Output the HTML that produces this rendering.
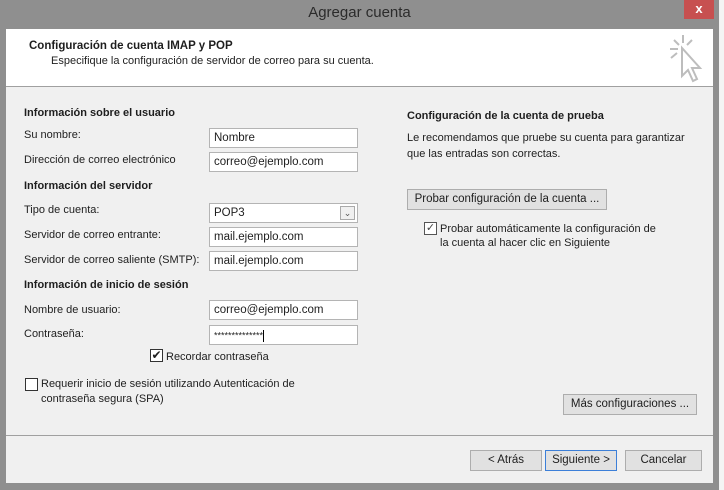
<!DOCTYPE html>
<html><head><meta charset="utf-8"><style>
*{margin:0;padding:0;box-sizing:border-box}
body{width:724px;height:490px;background:#f4f4f4;position:relative;overflow:hidden;font-family:"Liberation Sans",sans-serif;font-size:11px;color:#1e1e1e}
.a{position:absolute;white-space:nowrap}
.inp{position:absolute;background:#fff;border:1px solid #b4b4b4;height:20px;padding:3px 0 0 4px;font-size:11.5px}
.btn{position:absolute;background:#e1e1e1;border:1px solid #adadad;height:21px;text-align:center;line-height:19px;font-size:11.5px}
.h{font-weight:bold}
.cb{position:absolute;width:13px;height:13px;background:#fff;border:1px solid #333}
</style></head><body>
<div class="a" style="left:0;top:0;width:719px;height:490px;background:#8f8f8f"></div>
<div class="a" style="left:684px;top:0;width:30px;height:19px;background:#c75050;color:#fff;text-align:center;font-size:13px;line-height:18px;font-weight:bold">x</div>
<div class="a" style="left:0;top:4px;width:719px;text-align:center;font-size:15px;color:#2b2b2b">Agregar cuenta</div>
<div class="a" style="left:6px;top:29px;width:707px;height:454px;background:#f0f0f0"></div>
<div class="a" style="left:6px;top:29px;width:707px;height:58px;background:#fff;border-bottom:1px solid #a0a0a0"></div>
<div class="a h" style="left:29px;top:40px;font-size:11.5px">Configuración de cuenta IMAP y POP</div>
<div class="a" style="left:51px;top:55px;font-size:11px">Especifique la configuración de servidor de correo para su cuenta.</div>
<svg class="a" style="left:664px;top:32px" width="40" height="52"><g stroke="#bdbdbd" stroke-width="2" fill="none"><path d="M19 3v8M10 8l5 5M28 8l-5 5M6 17h8M7 26l6-5"/><path d="M18 16v28l6-6 5 11 4-2-5-11h8z" fill="#fff"/></g></svg>
<div class="a h" style="left:24px;top:107px">Información sobre el usuario</div>
<div class="a" style="left:24px;top:129px">Su nombre:</div>
<div class="inp" style="left:209px;top:128px;width:149px">Nombre</div>
<div class="a" style="left:24px;top:154px">Dirección de correo electrónico</div>
<div class="inp" style="left:209px;top:152px;width:149px">correo@ejemplo.com</div>
<div class="a h" style="left:24px;top:180px">Información del servidor</div>
<div class="a" style="left:24px;top:204px">Tipo de cuenta:</div>
<div class="inp" style="left:209px;top:203px;width:149px">POP3<div class="a" style="left:130px;top:2px;width:15px;height:14px;border:1px solid #aaa;background:#f0f0f0;font-size:9px;text-align:center;line-height:12px;color:#555">⌄</div></div>
<div class="a" style="left:24px;top:229px">Servidor de correo entrante:</div>
<div class="inp" style="left:209px;top:227px;width:149px">mail.ejemplo.com</div>
<div class="a" style="left:24px;top:254px">Servidor de correo saliente (SMTP):</div>
<div class="inp" style="left:209px;top:251px;width:149px">mail.ejemplo.com</div>
<div class="a h" style="left:24px;top:279px">Información de inicio de sesión</div>
<div class="a" style="left:24px;top:304px">Nombre de usuario:</div>
<div class="inp" style="left:209px;top:300px;width:149px">correo@ejemplo.com</div>
<div class="a" style="left:24px;top:328px">Contraseña:</div>
<div class="inp" style="left:209px;top:325px;width:149px;font-size:9px;padding-top:4px">**************<span style="display:inline-block;width:1px;height:12px;background:#000;vertical-align:middle"></span></div>
<div class="cb" style="left:150px;top:349px;font-size:12px;line-height:11px;text-align:center">✔</div>
<div class="a" style="left:166px;top:351px">Recordar contraseña</div>
<div class="cb" style="left:25px;top:378px"></div>
<div class="a" style="left:41px;top:377px;line-height:15px">Requerir inicio de sesión utilizando Autenticación de<br>contraseña segura (SPA)</div>
<div class="a h" style="left:407px;top:110px">Configuración de la cuenta de prueba</div>
<div class="a" style="left:407px;top:130px;line-height:16px">Le recomendamos que pruebe su cuenta para garantizar<br>que las entradas son correctas.</div>
<div class="btn" style="left:407px;top:189px;width:200px">Probar configuración de la cuenta ...</div>
<div class="cb" style="left:424px;top:222px;border-color:#555;font-size:11px;line-height:11px;text-align:center;color:#444">✓</div>
<div class="a" style="left:440px;top:222px;line-height:14px">Probar automáticamente la configuración de<br>la cuenta al hacer clic en Siguiente</div>
<div class="btn" style="left:563px;top:394px;width:134px">Más configuraciones ...</div>
<div class="a" style="left:6px;top:435px;width:707px;border-top:1px solid #a0a0a0"></div>
<div class="btn" style="left:470px;top:450px;width:72px">&lt; Atrás</div>
<div class="btn" style="left:545px;top:450px;width:72px;border-color:#3c7fd8">Siguiente &gt;</div>
<div class="btn" style="left:625px;top:450px;width:77px">Cancelar</div>
</body></html>
